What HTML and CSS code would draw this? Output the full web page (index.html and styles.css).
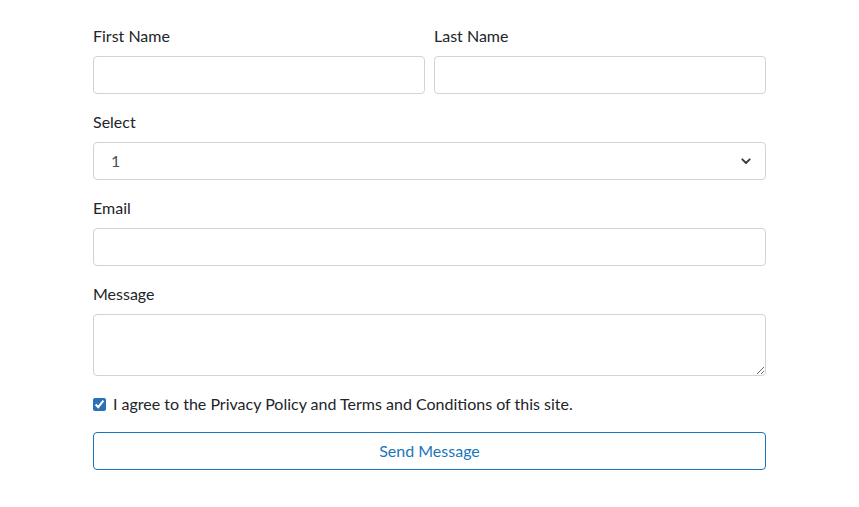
FILE: index.html
```html
<!DOCTYPE html>
<html lang="en">
<head>
<meta charset="utf-8">
<title>Contact form</title>
<link rel="stylesheet" href="styles.css">
</head>
<body>
<form class="form">
  <div class="row">
    <div class="group col">
      <label class="label" for="fn">First Name</label>
      <input class="control" id="fn" type="text">
    </div>
    <div class="group col">
      <label class="label" for="ln">Last Name</label>
      <input class="control" id="ln" type="text">
    </div>
  </div>
  <div class="group">
    <label class="label" for="sel">Select</label>
    <div class="select">
      <span class="select-value">1</span>
      <svg class="chev" width="10" height="7" viewBox="0 0 10 7"><path d="M1.3 1.3 L5 5 L8.7 1.3" fill="none" stroke="#343a40" stroke-width="1.8" stroke-linecap="round" stroke-linejoin="round"/></svg>
    </div>
  </div>
  <div class="group">
    <label class="label" for="em">Email</label>
    <input class="control" id="em" type="email">
  </div>
  <div class="group">
    <label class="label" for="msg">Message</label>
    <textarea class="control area" id="msg" rows="2"></textarea>
  </div>
  <div class="group check">
    <input class="check-input" type="checkbox" id="agree" checked>
    <label class="check-label" for="agree">I agree to the Privacy Policy and Terms and Conditions of this site.</label>
  </div>
  <button class="btn" type="button">Send Message</button>
</form>
</body>
</html>
```
FILE: styles.css
```css
* { box-sizing: border-box; }
html, body { margin: 0; padding: 0; background: #fff; }
body {
  font-family: Lato, "Noto Sans", sans-serif;
  font-size: 16px;
  line-height: 24px;
  color: #212529;
}
.form {
  width: 673px;
  margin: 24px auto 0;
}
.row {
  display: flex;
  gap: 9px;
}
.col { flex: 1 1 0; min-width: 0; }
.group { margin-bottom: 16px; }
.label {
  display: block;
  margin-bottom: 8px;
}
.control {
  display: block;
  width: 100%;
  height: 38px;
  padding: 6px 12px;
  font: inherit;
  color: #495057;
  background: #fff;
  border: 1px solid #ced4da;
  border-radius: 4px;
  outline: none;
}
.area {
  height: 62px;
  resize: vertical;
}
.select {
  display: flex;
  align-items: center;
  justify-content: space-between;
  height: 38px;
  padding: 6px 14px 6px 17px;
  border: 1px solid #ced4da;
  border-radius: 4px;
  color: #495057;
}
.chev { margin-top: 1px; }
.check {
  display: flex;
  align-items: flex-start;
}
.check-input {
  width: 13px;
  height: 13px;
  margin: 6px 7px 0 0;
  accent-color: #2a70b8;
}
.btn {
  display: block;
  width: 100%;
  height: 38px;
  padding: 6px 12px;
  font: inherit;
  color: #1a75bb;
  background: #fff;
  border: 1px solid #1a75bb;
  border-radius: 4px;
  cursor: pointer;
}
```
